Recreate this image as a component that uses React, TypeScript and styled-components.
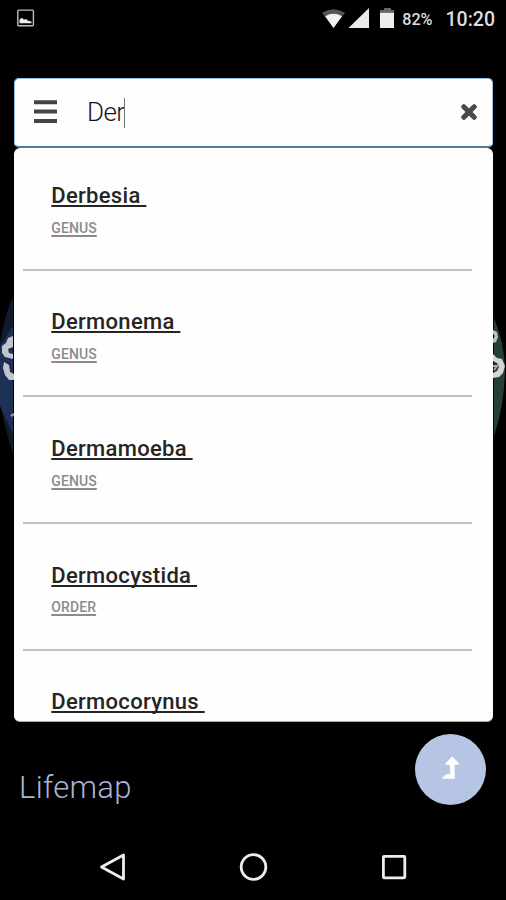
import React from "react";
import styled, { createGlobalStyle } from "styled-components";

const GlobalStyle = createGlobalStyle`
  * { box-sizing: border-box; }
  body { margin: 0; background: #000; font-family: Roboto, "Liberation Sans", sans-serif; }
`;

const Screen = styled.div`
  position: relative;
  display: flex;
  flex-direction: column;
  width: 506px;
  height: 900px;
  overflow: hidden;
  background: #000;
`;

const MapBackdrop = styled.svg`
  position: absolute;
  left: 0;
  top: 280px;
`;

const StatusBar = styled.header`
  display: flex;
  align-items: center;
  height: 38px;
  padding: 0 11px 0 17px;
  margin-bottom: 40px;
  color: #dedede;
  flex: none;
`;

const StatusIcons = styled.svg`
  margin-left: auto;
  margin-right: 7px;
`;

const StatusText = styled.span<{ $size: number; $gap?: number }>`
  font-size: ${(p) => p.$size}px;
  font-weight: 500;
  line-height: 38px;
  padding-top: 2px;
  margin-left: ${(p) => p.$gap ?? 0}px;
  white-space: nowrap;
`;

const SearchBox = styled.div`
  position: relative;
  display: flex;
  align-items: center;
  flex: none;
  height: 70px;
  margin: 0 13px 0 14px;
  padding: 0 14px 2px 19px;
  background: #fefefe;
  border: 1px solid #91c3ea;
  border-bottom: 2px solid #4a7d9f;
  border-radius: 5px;
`;

const Query = styled.div`
  display: flex;
  align-items: center;
  flex: 1;
  margin-left: 29px;
  font-size: 26px;
  font-weight: 300;
  line-height: 36px;
  letter-spacing: -0.6px;
  color: #161616;
`;

const Caret = styled.span`
  width: 1px;
  height: 30px;
  margin-top: 3px;
  background: #777;
`;

const Results = styled.ul`
  position: relative;
  flex: none;
  list-style: none;
  height: 574px;
  margin: 0 13px 0 14px;
  padding: 0 21px 0 9px;
  overflow: hidden;
  background: #fefefe;
  border-radius: 6px;
  border-bottom: 1px solid #aaa;
`;

const Result = styled.li`
  height: 126.6px;
  padding: 37.6px 0 0 28.3px;
  border-bottom: 2px solid #c2c2c2;

  &:first-child {
    height: 122.8px;
    padding-top: 34px;
  }

  &:last-child {
    border-bottom: 0;
  }
`;

const Name = styled.div`
  font-size: 22px;
  font-weight: 500;
  line-height: 28px;
  letter-spacing: 0.3px;
  white-space: pre;
  color: #252525;
  text-decoration: underline;
  text-decoration-thickness: 1.5px;
  text-underline-offset: 2px;
  text-decoration-skip-ink: none;
`;

const Rank = styled.div`
  margin-top: 7.6px;
  font-size: 14px;
  font-weight: 500;
  line-height: 20px;
  letter-spacing: 0.1px;
  color: #8b8b8b;
  text-decoration: underline;
  text-decoration-thickness: 1.5px;
  text-underline-offset: 2px;
`;

const Footer = styled.footer`
  position: relative;
  display: flex;
  justify-content: space-between;
  flex: none;
  height: 108px;
  padding: 12px 20px 0 19px;
`;

const Brand = styled.div`
  margin-top: 34px;
  font-size: 31px;
  font-weight: 300;
  line-height: 40px;
  letter-spacing: 0.3px;
  color: #a9b5d6;
`;

const RoundButton = styled.button`
  display: grid;
  place-items: center;
  width: 71px;
  height: 71px;
  padding: 0;
  border: 0;
  border-radius: 50%;
  background: #b7c5e4;
`;

const NavBar = styled.nav`
  display: flex;
  align-items: center;
  justify-content: space-between;
  height: 70px;
  padding: 4px 97px 0 98px;
`;

const items = [
  ["Derbesia ", "GENUS"],
  ["Dermonema ", "GENUS"],
  ["Dermamoeba ", "GENUS"],
  ["Dermocystida ", "ORDER"],
  ["Dermocorynus ", ""],
];

const Backdrop = () => (
  <MapBackdrop width="506" height="190" viewBox="0 0 506 190">
    <path d="M13 16Q4 38 0 62V122Q5 150 13 174Z" fill="#0f1a2c" />
    <path d="M13 46L0 66V126L13 154Z" fill="#1d3155" />
    <path d="M494 38Q505 65 505 92Q504 126 494 156Z" fill="#253e36" />
    <path d="M13 56L8 58L6 63L2 66V73L5 77L13 79V74L9 73L8 69L13 67ZM4 82L3 88L5 95L9 100H14V94L10 92L9 85Z" fill="#c0c4cf" />
    <path d="M11 136L14 134" stroke="#9d8cba" strokeWidth="2.5" />
    <path d="M493 50L497 52L498 57L496 62L493 63V59L495 56L493 54Z" fill="#bcc3c0" />
    <path d="M493 74L497 78L502 79L505 86L503 93L499 97L493 98V93L497 91L499 87L497 83L493 81Z" fill="#d3d6d5" />
    <path d="M493 86L497 86L494 90" stroke="#a5aca9" strokeWidth="2" fill="none" />
  </MapBackdrop>
);

export default function App() {
  return (
    <>
      <GlobalStyle />
      <Screen>
        <Backdrop />
        <StatusBar>
          <svg width="18" height="20" viewBox="0 0 18 20">
            <rect x=".8" y="1.1" width="15.6" height="15.6" rx="1" fill="none" stroke="#bdbdbd" strokeWidth="1.4" />
            <path d="M2.5 14.2V10.5L5 8.8L7 10.8L9 10L11 11.7L14.5 12.5V14.2Z" fill="#eee" />
          </svg>
          <StatusIcons width="73" height="24" viewBox="0 0 73 24">
            <path d="M0 5.8Q11.5-1.5 23 5.8L11.5 21Z" fill="#555" />
            <path d="M3.2 9.2Q11.5 4.5 20 9.2L11.5 21Z" fill="#f1f1f1" />
            <path d="M26.5 21L47 1V21Z" fill="#e9e9e9" />
            <path d="M58 5V3H62V1H69V3H72V5Z" fill="#666" />
            <path d="M58 5.5H72V21H58Z" fill="#eee" />
          </StatusIcons>
          <StatusText $size={16.2}>82%</StatusText>
          <StatusText $size={19.5} $gap={13}>10:20</StatusText>
        </StatusBar>
        <SearchBox>
          <svg width="24" height="26" viewBox="0 0 24 26">
            <path d="M0 3.2H23M0 12.5H23M0 22H23" stroke="#454545" strokeWidth="4" />
          </svg>
          <Query>Der<Caret /></Query>
          <svg width="18" height="18" viewBox="0 0 18 18">
            <path d="M3.8 3.8L14.2 14.2M14.2 3.8L3.8 14.2" stroke="#4a4a4a" strokeWidth="5" strokeLinecap="round" />
            <path d="M3.8 3.8L14.2 14.2M14.2 3.8L3.8 14.2" stroke="#4a4a4a" strokeWidth="4" strokeLinecap="square" />
          </svg>
        </SearchBox>
        <Results>
          {items.map(([name, rank]) => (
            <Result key={name}>
              <Name>{name}</Name>
              {rank && <Rank>{rank}</Rank>}
            </Result>
          ))}
        </Results>
        <Footer>
          <Brand>Lifemap</Brand>
          <RoundButton aria-label="Go up">
            <svg width="24" height="28" viewBox="0 0 24 28">
              <path d="M13.3 .7L19.3 7V8.5H15.3V22.5H3.3L7 18.5H11.3V8.5H7V7Z" fill="#fff" stroke="#fff" strokeWidth=".6" strokeLinejoin="round" />
            </svg>
          </RoundButton>
        </Footer>
        <NavBar>
          <svg width="30" height="30" viewBox="0 0 30 30" fill="none" stroke="#ededed" strokeWidth="2.8">
            <path d="M25.5 3V27L3.5 15Z" strokeLinejoin="round" />
          </svg>
          <svg width="30" height="30" viewBox="0 0 30 30" fill="none" stroke="#ededed" strokeWidth="2.8">
            <circle cx="14.5" cy="15" r="12.3" />
          </svg>
          <svg width="30" height="30" viewBox="0 0 30 30" fill="none" stroke="#ededed" strokeWidth="2.8">
            <rect x="4.4" y="4.4" width="21.4" height="21.4" rx=".7" />
          </svg>
        </NavBar>
      </Screen>
    </>
  );
}
